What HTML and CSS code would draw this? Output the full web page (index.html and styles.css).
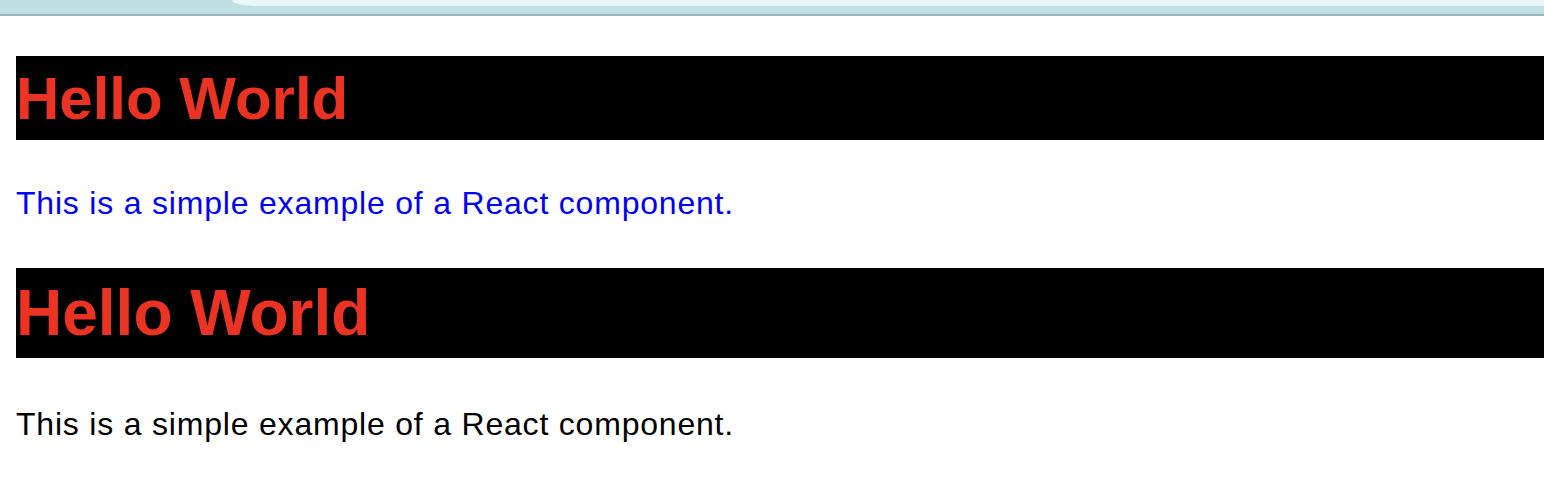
FILE: index.html
```html
<!DOCTYPE html>
<html lang="en">
<head>
<meta charset="utf-8">
<title>React component</title>
<link rel="stylesheet" href="styles.css">
</head>
<body>
<div class="chrome">
  <div class="chrome-tab"></div>
</div>
<main class="content">
  <h1 class="title title-small">Hello World</h1>
  <p class="text text-blue">This is a simple example of a React component.</p>
  <h1 class="title title-large">Hello World</h1>
  <p class="text text-black">This is a simple example of a React component.</p>
</main>
</body>
</html>
```
FILE: styles.css
```css
html, body {
  margin: 0;
  padding: 0;
  background: #ffffff;
}

body {
  font-family: "Liberation Sans", Arial, sans-serif;
  width: 1544px;
  overflow: hidden;
}

.chrome {
  height: 14px;
  background: #bfe0e3;
  border-bottom: 2px solid #98b4b6;
  display: flex;
  justify-content: flex-end;
}

.chrome-tab {
  width: 1312px;
  height: 6px;
  background: #ecf6f8;
  border-bottom-left-radius: 24px 6px;
}

.content {
  padding: 40px 0 0 16px;
  display: flex;
  flex-direction: column;
}

.title {
  margin: 0;
  background: #000000;
  color: #ea3323;
  font-weight: bold;
}

.title-small {
  font-size: 60px;
  line-height: 82px;
  padding-top: 2px;
}

.title-large {
  font-size: 64px;
  line-height: 89px;
  padding-top: 1px;
  margin-top: 46px;
}

.text {
  margin: 0;
  font-size: 32px;
  line-height: 40px;
  letter-spacing: 0.8px;
}

.text-blue {
  color: #0000f5;
  margin-top: 43px;
  margin-bottom: -1px;
}

.text-black {
  color: #000000;
  margin-top: 46px;
}
```
